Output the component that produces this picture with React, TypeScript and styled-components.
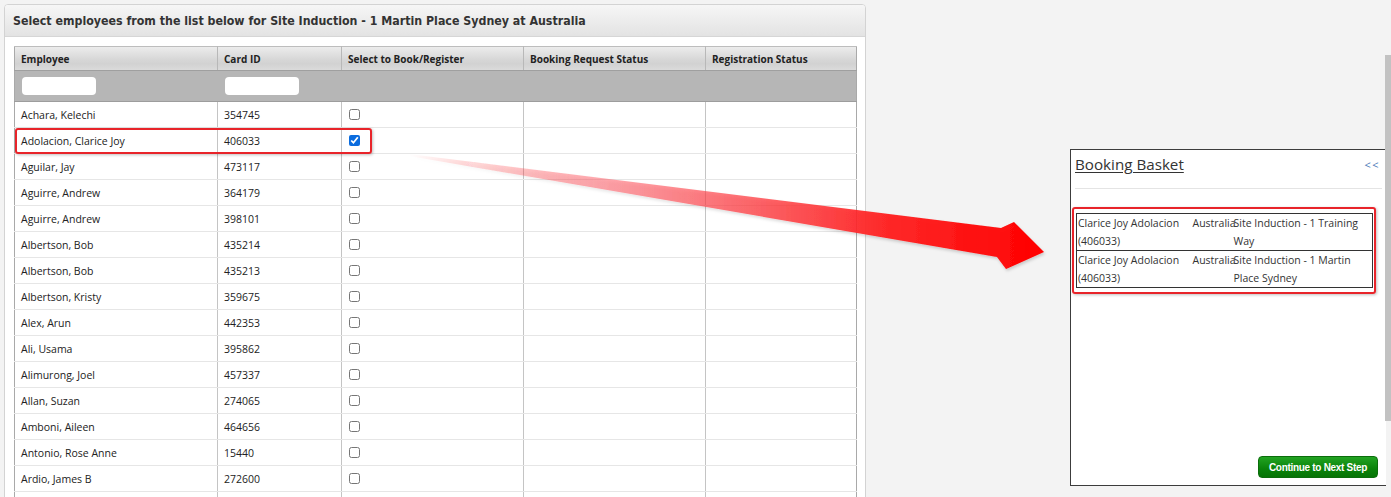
import React from 'react';
import styled, { createGlobalStyle } from 'styled-components';

type Employee = { name: string; cardId: string; checked?: boolean };

const employees: Employee[] = [
  { name: 'Achara, Kelechi', cardId: '354745' },
  { name: 'Adolacion, Clarice Joy', cardId: '406033', checked: true },
  { name: 'Aguilar, Jay', cardId: '473117' },
  { name: 'Aguirre, Andrew', cardId: '364179' },
  { name: 'Aguirre, Andrew', cardId: '398101' },
  { name: 'Albertson, Bob', cardId: '435214' },
  { name: 'Albertson, Bob', cardId: '435213' },
  { name: 'Albertson, Kristy', cardId: '359675' },
  { name: 'Alex, Arun', cardId: '442353' },
  { name: 'Ali, Usama', cardId: '395862' },
  { name: 'Alimurong, Joel', cardId: '457337' },
  { name: 'Allan, Suzan', cardId: '274065' },
  { name: 'Amboni, Aileen', cardId: '464656' },
  { name: 'Antonio, Rose Anne', cardId: '15440' },
  { name: 'Ardio, James B', cardId: '272600' },
  { name: '', cardId: '' },
];

const basket = [
  { who: 'Clarice Joy Adolacion (406033)', country: 'Australia', course: 'Site Induction - 1 Training Way' },
  { who: 'Clarice Joy Adolacion (406033)', country: 'Australia', course: 'Site Induction - 1 Martin Place Sydney' },
];

const GlobalStyle = createGlobalStyle`
  html, body {
    margin: 0;
    padding: 0;
    background: #f3f3f3;
    overflow: hidden;
  }
  body {
    font-family: 'Open Sans', 'Noto Sans', sans-serif;
    color: #222;
  }
`;

export default function App() {
  return (
    <>
      <GlobalStyle />
      <Page>
        <Panel>
          <PanelHeader>
            Select employees from the list below for Site Induction - 1 Martin Place Sydney at Australia
          </PanelHeader>
          <TableWrap>
            <Grid>
              <colgroup>
                <col style={{ width: 203 }} />
                <col style={{ width: 124 }} />
                <col style={{ width: 182 }} />
                <col style={{ width: 182 }} />
                <col />
              </colgroup>
              <thead>
                <HeadRow>
                  <Th>Employee</Th>
                  <Th>Card ID</Th>
                  <Th>Select to Book/Register</Th>
                  <Th>Booking Request Status</Th>
                  <Th>Registration Status</Th>
                </HeadRow>
                <FilterRow>
                  <FilterCell>
                    <FilterInput />
                  </FilterCell>
                  <FilterCell>
                    <FilterInput />
                  </FilterCell>
                  <FilterCell />
                  <FilterCell />
                  <FilterCell />
                </FilterRow>
              </thead>
              <tbody>
                {employees.map((e, i) => (
                  <BodyRow key={i}>
                    <Td>{e.name}</Td>
                    <Td>{e.cardId}</Td>
                    <Td>{e.name && <Check type="checkbox" defaultChecked={e.checked} />}</Td>
                    <Td />
                    <Td />
                  </BodyRow>
                ))}
              </tbody>
            </Grid>
            <RowHighlight />
          </TableWrap>
        </Panel>

        <Basket>
          <BasketHead>
            <BasketTitle>Booking Basket</BasketTitle>
            <Collapse>&lt;&lt;</Collapse>
          </BasketHead>
          <Rule />
          <BasketBody>
            <BasketFrame>
              <BasketTable>
                <colgroup>
                  <col style={{ width: 116 }} />
                  <col style={{ width: 41 }} />
                  <col />
                </colgroup>
                <tbody>
                  {basket.map((b, i) => (
                    <BasketRow key={i}>
                      <BasketCell>{b.who}</BasketCell>
                      <BasketCell>{b.country}</BasketCell>
                      <BasketCell>{b.course}</BasketCell>
                    </BasketRow>
                  ))}
                </tbody>
              </BasketTable>
            </BasketFrame>
          </BasketBody>
          <BasketFoot>
            <NextButton>Continue to Next Step</NextButton>
          </BasketFoot>
        </Basket>

        <Arrow width="1391" height="497" viewBox="0 0 1391 497">
          <defs>
            <linearGradient id="arrowFill" x1="409" y1="0" x2="1044" y2="0" gradientUnits="userSpaceOnUse">
              <stop offset="0" stopColor="#ff0000" stopOpacity="0" />
              <stop offset="0.3" stopColor="#ff5560" stopOpacity="0.5" />
              <stop offset="0.75" stopColor="#ff2020" stopOpacity="0.95" />
              <stop offset="1" stopColor="#ff0000" stopOpacity="1" />
            </linearGradient>
            <filter id="arrowShadow" x="-5%" y="-20%" width="110%" height="140%">
              <feDropShadow dx="1" dy="2" stdDeviation="1.5" floodColor="#000" floodOpacity="0.18" />
            </filter>
          </defs>
          <path
            d="M409 154 L1001 228 L1014 222 L1044 252 L1006 269 L997 257 L409 156 Z"
            fill="url(#arrowFill)"
            filter="url(#arrowShadow)"
          />
        </Arrow>
        <ScrollThumb />
      </Page>
    </>
  );
}

const Page = styled.div`
  position: relative;
  width: 1391px;
  height: 497px;
  display: flex;
  align-items: flex-start;
  overflow: hidden;
`;

const Panel = styled.section`
  margin: 4px 0 0 4px;
  width: 862px;
  height: 520px;
  box-sizing: border-box;
  border: 1px solid #d3d3d3;
  border-radius: 4px 4px 0 0;
  background: #fff;
  flex-shrink: 0;
`;

const PanelHeader = styled.h2`
  margin: 0;
  height: 31px;
  padding: 0 0 0 8px;
  display: flex;
  align-items: center;
  background: linear-gradient(#f6f6f6, #e3e3e3);
  border-bottom: 1px solid #d6d6d6;
  border-radius: 3px 3px 0 0;
  font-family: 'DejaVu Sans Condensed', 'DejaVu Sans', Verdana, sans-serif;
  font-stretch: condensed;
  font-size: 12.3px;
  font-weight: bold;
  color: #333;
  white-space: nowrap;
`;

const TableWrap = styled.div`
  position: relative;
  padding: 9px 9px 0 9px;
`;

const Grid = styled.table`
  width: 843px;
  border-collapse: collapse;
  table-layout: fixed;
  border-left: 1px solid #a9a9a9;
  border-right: 1px solid #a9a9a9;
  font-size: 10.5px;
`;

const HeadRow = styled.tr`
  height: 24px;
  background: linear-gradient(#ececec 0%, #d6d6d6 55%, #d2d2d2 70%, #dcdcdc 100%);
`;

const Th = styled.th`
  padding: 0 6px;
  text-align: left;
  font-weight: bold;
  font-size: 10px;
  color: #222;
  border-right: 1px solid #b8b8b8;
  border-top: 1px solid #bdbdbd;
  border-bottom: 1px solid #9f9f9f;
  white-space: nowrap;
  &:last-child {
    border-right: none;
  }
`;

const FilterRow = styled.tr`
  height: 31px;
  background: #b6b6b6;
`;

const FilterCell = styled.td`
  padding: 0 8px 0 7px;
  border-bottom: 1px solid #9d9d9d;
`;

const FilterInput = styled.input`
  display: block;
  width: 74px;
  height: 18px;
  box-sizing: border-box;
  border: none;
  border-radius: 4px;
  background: #fff;
`;

const BodyRow = styled.tr`
  height: 26px;
`;

const Td = styled.td`
  padding: 0 6px;
  border-right: 1px solid #c4c4c4;
  border-bottom: 1px solid #e6e6e6;
  white-space: nowrap;
  color: #222;
  &:last-child {
    border-right: none;
  }
`;

const Check = styled.input`
  margin: 0 0 2px 1px;
  width: 11px;
  height: 11px;
  accent-color: #0b6cde;
  vertical-align: middle;
`;

const RowHighlight = styled.div`
  position: absolute;
  left: 10px;
  top: 91px;
  width: 357px;
  height: 26px;
  box-sizing: border-box;
  border: 2px solid #e8242a;
  border-radius: 3px;
  box-shadow: 1px 1px 3px rgba(0, 0, 0, 0.25);
  pointer-events: none;
`;

const Basket = styled.aside`
  margin: 149px 0 0 204px;
  width: 316px;
  height: 337px;
  box-sizing: border-box;
  border: 1px solid #3c3c3c;
  border-right: none;
  background: #fff;
  display: flex;
  flex-direction: column;
  flex-shrink: 0;
`;

const BasketHead = styled.div`
  display: flex;
  justify-content: space-between;
  align-items: center;
  padding: 2px 6px 0 4px;
  height: 24px;
`;

const BasketTitle = styled.h3`
  margin: 0;
  font-family: 'Open Sans', sans-serif;
  font-weight: normal;
  font-size: 15.2px;
  color: #333;
  text-decoration: underline;
  text-underline-offset: 2px;
`;

const Collapse = styled.span`
  font-size: 11px;
  color: #4a78b8;
  letter-spacing: 1.5px;
`;

const Rule = styled.hr`
  margin: 12px 4px 0 4px;
  border: none;
  border-top: 1px solid #e4e4e4;
`;

const BasketBody = styled.div`
  padding: 18px 0 0 1px;
  flex: 1;
`;

const BasketFrame = styled.div`
  width: 304px;
  padding: 4px 2px;
  box-sizing: border-box;
  border: 2px solid #e8242a;
  border-radius: 3px;
  box-shadow: 1px 1px 3px rgba(0, 0, 0, 0.25);
`;

const BasketTable = styled.table`
  width: 297px;
  border-collapse: collapse;
  table-layout: fixed;
  border: 1px solid #333;
  font-size: 10.5px;
`;

const BasketRow = styled.tr`
  border-bottom: 1px solid #333;
`;

const BasketCell = styled.td`
  padding: 0 0 0 1px;
  line-height: 18px;
  vertical-align: top;
  color: #333;
  &:nth-child(2) {
    text-align: right;
    padding: 0;
  }
  &:nth-child(3) {
    padding: 0;
  }
`;

const BasketFoot = styled.div`
  display: flex;
  justify-content: flex-end;
  padding: 0 8px 7px 0;
`;

const NextButton = styled.button`
  width: 120px;
  height: 22px;
  border: 1px solid #0b6d0b;
  border-radius: 4px;
  background: linear-gradient(#22a322, #0a820a 60%, #067406);
  color: #fff;
  font-family: 'Liberation Sans', Arial, sans-serif;
  font-weight: bold;
  font-size: 10px;
  letter-spacing: -0.3px;
  padding: 0;
  cursor: pointer;
`;

const Arrow = styled.svg`
  position: absolute;
  left: 0;
  top: 0;
  pointer-events: none;
`;

const ScrollThumb = styled.div`
  position: absolute;
  right: 0;
  top: 55px;
  width: 6px;
  height: 366px;
  background: #c2c2c2;
`;
